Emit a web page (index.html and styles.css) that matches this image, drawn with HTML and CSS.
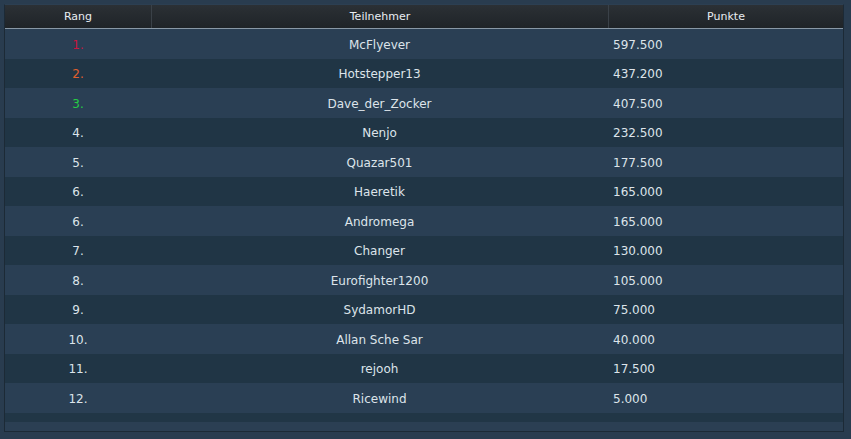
FILE: index.html
```html
<!DOCTYPE html>
<html lang="de">
<head>
<meta charset="utf-8">
<link rel="stylesheet" href="styles.css">
</head>
<body>
<div class="box">
  <div class="table">
    <div class="head">
      <div class="hc c1">Rang</div>
      <div class="hc c2">Teilnehmer</div>
      <div class="hc c3">Punkte</div>
    </div>
    <div class="row"><div class="c1 r1">1.</div><div class="c2">McFlyever</div><div class="c3 pts">597.500</div></div>
    <div class="row"><div class="c1 r2">2.</div><div class="c2">Hotstepper13</div><div class="c3 pts">437.200</div></div>
    <div class="row"><div class="c1 r3">3.</div><div class="c2">Dave_der_Zocker</div><div class="c3 pts">407.500</div></div>
    <div class="row"><div class="c1">4.</div><div class="c2">Nenjo</div><div class="c3 pts">232.500</div></div>
    <div class="row"><div class="c1">5.</div><div class="c2">Quazar501</div><div class="c3 pts">177.500</div></div>
    <div class="row"><div class="c1">6.</div><div class="c2">Haeretik</div><div class="c3 pts">165.000</div></div>
    <div class="row"><div class="c1">6.</div><div class="c2">Andromega</div><div class="c3 pts">165.000</div></div>
    <div class="row"><div class="c1">7.</div><div class="c2">Changer</div><div class="c3 pts">130.000</div></div>
    <div class="row"><div class="c1">8.</div><div class="c2">Eurofighter1200</div><div class="c3 pts">105.000</div></div>
    <div class="row"><div class="c1">9.</div><div class="c2">SydamorHD</div><div class="c3 pts">75.000</div></div>
    <div class="row"><div class="c1">10.</div><div class="c2">Allan Sche Sar</div><div class="c3 pts">40.000</div></div>
    <div class="row"><div class="c1">11.</div><div class="c2">rejooh</div><div class="c3 pts">17.500</div></div>
    <div class="row"><div class="c1">12.</div><div class="c2">Ricewind</div><div class="c3 pts">5.000</div></div>
    <div class="foot"></div>
  </div>
</div>
</body>
</html>
```
FILE: styles.css
```css
html, body {
  margin: 0;
  padding: 0;
  background: #293c4f;
}
body {
  font-family: "DejaVu Sans", Verdana, sans-serif;
  color: #dde4ea;
}
.box {
  margin: 4px 7px 6px 4px;
  border: 1px solid #1c2a36;
  border-top-color: #2c3f52;
  height: 428px;
  box-sizing: border-box;
  background: #2b3f53;
}
.table {
  display: flex;
  flex-direction: column;
}
.head {
  display: grid;
  grid-template-columns: 146px 457px 1fr;
  height: 23px;
  background: linear-gradient(#2b3035, #1f2428);
  border-bottom: 1px solid #8898a6;
  font-size: 11px;
  line-height: 23px;
}
.hc {
  text-align: center;
  color: #e8edf2;
}
.hc + .hc {
  border-left: 1px solid #3a4148;
}
.row {
  display: grid;
  grid-template-columns: 146px 457px 1fr;
  height: 29.5px;
  box-sizing: border-box;
  padding-top: 2px;
  align-items: center;
  font-size: 12px;
  background: #2a3f54;
}
.row:nth-of-type(odd) {
  background: #203545;
}
.c1, .c2 {
  text-align: center;
}
.pts {
  padding-left: 5px;
}
.r1 { color: #c8163f; }
.r2 { color: #e2602c; }
.r3 { color: #25cc45; }
.foot {
  height: 9px;
  background: #213646;
}
```
